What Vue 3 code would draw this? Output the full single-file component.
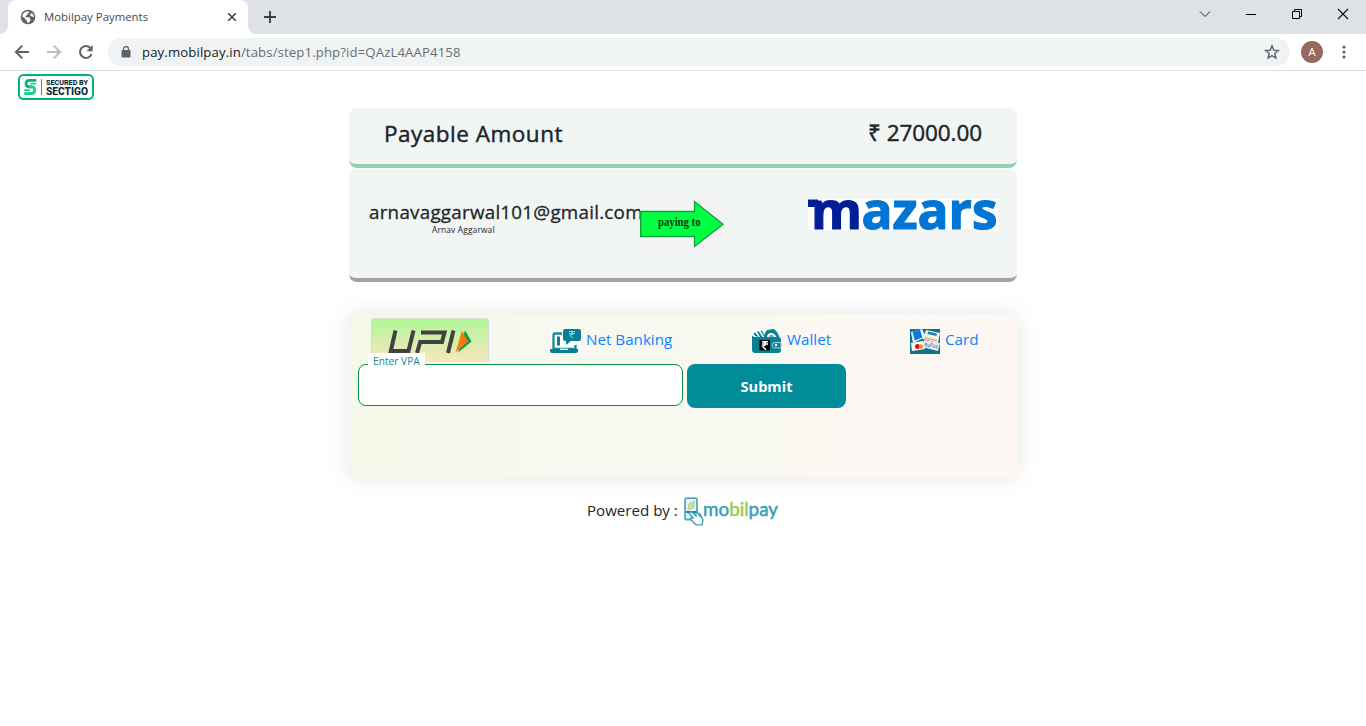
<script setup>
</script>

<template>
  <div class="window">
    <header class="tabstrip">
      <div class="tab">
        <svg class="globe" width="16" height="16" viewBox="0 0 16 16">
          <circle cx="8" cy="8" r="7.3" fill="#5f6368" />
          <path d="M7.500 2.300c2 .1 1.800 1 1.300 1.700-.5.700-1.300.5-1.500 1.200-.2.600-.2 1-.8 1.300-.6.300-1 .3-1 .9 0 .6.500.8 1.200.8h2c1 0 1.300.7 1.300 1.500 0 .8.6.9.6 1.600 0 .7-.9.900-1.200 1.400-.4.7-1.200 1.200-2.200 1-.5-.6.100-1.200-.3-1.900-.4-.7-1.300-.7-1.400-1.500-.1-.8-.8-1.300-1.600-1.900l-1.700-.9C2.400 4.700 4.700 2.500 7.500 2.300z" fill="#fff" />
          <path d="M11 4.300l2 .7c.7 1 1 2 .9 3-.9.300-1.300-.5-2.100-.7-.8-.2-1.500-.4-1.500-1.300 0-.8.500-1 .7-1.700z" fill="#fff" />
        </svg>
        <span class="tab-title">Mobilpay Payments</span>
        <svg class="tab-close" width="10" height="10" viewBox="0 0 10 10"><path d="M1.200 1.200l7.600 7.600M8.800 1.200L1.200 8.800" stroke="#3c4043" stroke-width="1.600" /></svg>
      </div>
      <svg class="plus" width="12" height="12" viewBox="0 0 12 12"><path d="M6 0v12M0 6h12" stroke="#3c4043" stroke-width="1.900" /></svg>
      <div class="controls">
        <svg width="12" height="12" viewBox="0 0 12 12"><path d="M1 3.500l5 5 5-5" fill="none" stroke="#222" /></svg>
        <svg width="12" height="12" viewBox="0 0 12 12"><path d="M1 6.500h10" stroke="#000" /></svg>
        <svg width="12" height="12" viewBox="0 0 12 12"><path d="M1.500 3.500h7v7h-7zM3.500 3.500v-2h7v7h-2" fill="none" stroke="#000" /></svg>
        <svg width="12" height="12" viewBox="0 0 12 12"><path d="M1 1l10 10M11 1L1 11" stroke="#111" stroke-width="1.100" /></svg>
      </div>
    </header>

    <div class="toolbar">
      <svg class="nav back" width="16" height="16" viewBox="0 0 16 16"><path d="M15 8H2.500M8.300 1.600L1.900 8l6.400 6.400" fill="none" stroke="#5f6368" stroke-width="2" /></svg>
      <svg class="nav" width="16" height="16" viewBox="0 0 16 16"><path d="M1 8h12.500M7.700 1.600L14.100 8l-6.400 6.400" fill="none" stroke="#bbbdc0" stroke-width="2" /></svg>
      <svg class="nav" width="16" height="16" viewBox="0 0 16 16"><path d="M13.600 10.200A6 6 0 1 1 12.500 4L13.600 5" fill="none" stroke="#5f6368" stroke-width="2" /><path d="M14.700 1v6.200H8.500z" fill="#5f6368" /></svg>
      <div class="omnibox">
        <svg class="lock" width="10" height="13" viewBox="0 0 10 13"><rect x="0.500" y="4" width="9" height="7.500" rx="1" fill="#5f6368" /><path d="M2.500 5V3a2.500 2.500 0 0 1 5 0V5" fill="none" stroke="#5f6368" stroke-width="1.300" /></svg>
        <span class="url"><b>pay.mobilpay.in</b>/tabs/step1.php?id=QAzL4AAP4158</span>
        <svg class="star" width="16" height="16" viewBox="0 0 16 16"><path d="M8 1.800l1.700 4.300 4.600.4-3.500 3 1.100 4.500L8 11.600 4.100 14l1.100-4.500-3.500-3 4.600-.4z" fill="none" stroke="#5f6368" stroke-width="1.400" /></svg>
      </div>
      <span class="avatar">A</span>
      <svg class="dots" width="4" height="14" viewBox="0 0 4 14"><g fill="#5f6368"><circle cx="2" cy="2" r="1.600" /><circle cx="2" cy="7" r="1.600" /><circle cx="2" cy="12" r="1.600" /></g></svg>
    </div>

    <main class="page">
      <svg class="seal" width="76" height="26" viewBox="0 0 76 26">
        <rect x="1" y="1" width="74" height="24" rx="4.500" fill="#fff" stroke="#00b67a" stroke-width="2" />
        <path d="M18.300 6.300H11.500Q8 6.300 8 9.600t3.500 3.300H14" fill="none" stroke="#00b67a" stroke-width="2.800" />
        <path d="M11.500 12.900h2.500q2.700 0 2.700 3.300t-3.200 3.300H6.300" fill="none" stroke="#19cf91" stroke-width="2.800" />
        <path d="M18.300 9.700h-6" stroke="#19cf91" stroke-width="1.500" />
        <path d="M6.300 16.200h5.500" stroke="#00b67a" stroke-width="1.500" />
        <path d="M23.500 5v16" stroke="#00b67a" />
        <text x="28" y="11" textLength="42" lengthAdjust="spacingAndGlyphs" class="seal-text" font-size="7.800">SECURED BY</text>
        <text x="28" y="20.800" textLength="42" lengthAdjust="spacingAndGlyphs" class="seal-text" font-size="11">SECTIGO</text>
      </svg>

      <div class="content">
        <section class="amount">
          <h1>Payable Amount</h1>
          <div class="total">₹ 27000.00</div>
        </section>

        <section class="parties">
          <div class="payer">
            <div class="email">arnavaggarwal101@gmail.com</div>
            <div class="name">Arnav Aggarwal</div>
          </div>
          <svg class="arrow" width="85" height="49" viewBox="0 0 85 49">
            <rect width="85" height="49" fill="#f5f4f4" />
            <path d="M.7 12.500H54.500V2.500L83 25.200 54.500 47.500V37.500H.7z" fill="#00ff40" stroke="#0b9e3c" stroke-width="1.300" />
            <text x="18" y="26.500" textLength="42.500" lengthAdjust="spacingAndGlyphs" class="arrow-text">paying to</text>
          </svg>
          <svg class="mazars" width="190" height="31" viewBox="0 0 190 31">
            <rect width="190" height="31" fill="#fff" />
            <text x="3" y="30" textLength="51" lengthAdjust="spacingAndGlyphs" fill="#001e96" stroke="#001e96">m</text>
            <path d="M0 .5h10v7.500H0z" fill="#001e96" />
            <text x="53.500" y="30" textLength="136" lengthAdjust="spacingAndGlyphs" fill="#0075d4" stroke="#0075d4">azars</text>
          </svg>
        </section>

        <section class="methods">
          <nav class="tabs">
            <a class="upi">
              <svg width="86" height="26" viewBox="0 0 86 26">
                <g fill="none" stroke="#414042" stroke-width="4">
                  <path d="M8.500 1.500L3.800 22H21.500L26.500 1.500" />
                  <path d="M30 24L33.200 13H55L57.500 3.500H34" />
                  <path d="M66.500 1.500L61 24" />
                </g>
                <path d="M78 1.500L84.500 12.500 71 23.500z" fill="#0a9b56" />
                <path d="M75 1.500L81 12.500 68.500 23.500z" fill="#ff7909" />
              </svg>
            </a>
            <a class="method">
              <svg width="31" height="25" viewBox="0 0 31 25">
                <rect width="31" height="25" fill="#fff" />
                <path d="M12 4.500H5q-1.500 0-1.500 1.500v14h22v-4" fill="none" stroke="#1b879b" stroke-width="2.300" />
                <path d="M7 7.500h3v9H7zM0 20h28v2q0 2-2 2H2q-2 0-2-2z" fill="#087f95" />
                <path d="M10 20.300h8" stroke="#fff" stroke-width="1.300" />
                <path d="M15 0h14q2 0 2 2v8q0 2-2 2h-8l-5 4v-4h-1q-2 0-2-2V2q0-2 2-2z" fill="#087f95" />
                <path d="M19 2.500h6M19 4.700h6M20.500 2.500q5 2.200-.5 4l3 3" fill="none" stroke="#b5dce2" />
              </svg>
              <span>Net Banking</span>
            </a>
            <a class="method wallet">
              <svg width="31" height="25" viewBox="0 0 31 25">
                <path d="M1 0h29v24H1z" fill="#fff" />
                <path d="M4 7L2.500 4.500 4 3.500l4 4.500zM9 8L6 2.500 7.500 2l4 6zM14 4l2-3 7-1 3 3 2.500 5h-3q-2-4-5.500-4t-4 4h-3z" fill="#087f95" />
                <path d="M10 1.500l4 6.500" stroke="#087f95" stroke-width="1.300" />
                <path d="M18 8q0-2.500 2.500-2.500T23 8z" fill="#6fb7c2" />
                <path d="M1 6.500l2 1.500h24q3 0 3 3v10q0 3-3 3H4q-3 0-3-3z" fill="#087f95" />
                <rect x="8.500" y="11" width="10.500" height="10.500" fill="#000" />
                <path d="M11 12.700h6M11 15h6M12 12.700q6 2.500-.5 4.500l3.500 3.500" fill="none" stroke="#fff" stroke-width="1.400" />
                <path d="M30 13.500h-6q-3 0-3 2.700t3 2.700h6z" fill="#087f95" stroke="#a7d7dc" />
                <circle cx="25" cy="16" r="1.300" fill="#fff" />
              </svg>
              <span>Wallet</span>
            </a>
            <a class="method">
              <svg width="30" height="25" viewBox="0 0 30 25">
                <rect width="30" height="25" fill="#0c748d" />
                <path d="M1 3l11-3 4 8-13 6z" fill="#eef7fb" />
                <path d="M2.500 2.800l7.500-2.300 2.300 8-7.500 3z" fill="#087bdc" />
                <path d="M16 1l14 3-2 10-15-4z" fill="#f1f3ee" />
                <path d="M18 2.500l9 2-.6 2.500-9-2z" fill="#217eaf" />
                <path d="M15 8l12 3-.4 1.500-12-3z" fill="#edac66" />
                <path d="M14 11l16 3-2 8-16-4z" fill="#e8eef8" />
                <text x="14" y="17.500" font-size="5.500" textLength="14" lengthAdjust="spacingAndGlyphs" transform="rotate(6 14 17)" fill="#263f8c" class="rupay">RuPay</text>
                <path d="M1 14l12-2 2 8-13 2z" fill="#fff" />
                <circle cx="7.500" cy="17.500" r="2.500" fill="#ed0019" />
                <circle cx="11" cy="17.500" r="2.300" fill="#ff9c0a" />
              </svg>
              <span>Card</span>
            </a>
          </nav>
          <form class="vpa" @submit.prevent>
            <label class="field">
              <span>Enter VPA</span>
              <input type="text" />
            </label>
            <button type="submit">Submit</button>
          </form>
        </section>

        <footer class="powered">
          <span>Powered by :</span>
          <svg width="95" height="30" viewBox="0 0 95 30">
            <rect x="1" y="1.200" width="12" height="21.500" rx="2" fill="#e5f4f8" stroke="#4aa6c2" stroke-width="1.700" />
            <path d="M5 6.500l5.500-2.500-1 7-5.500 1.500z" fill="#c8df9b" stroke="#a7ca6b" stroke-width=".7" />
            <path d="M2 15h11" stroke="#267f9e" stroke-width="2" />
            <path d="M5 16l4 5-2-.2q-2 1 1 3l4 4h6l1-5-4-6-3-2v4L7 14.500z" fill="#fff" stroke="#3999b8" stroke-width="1.300" />
            <path d="M14 16l2 4M16 16.500l2 4" stroke="#3999b8" />
            <text x="19" y="19.200" textLength="75" lengthAdjust="spacingAndGlyphs" font-size="18.500" class="brand" fill="#3b9dbb" stroke="#3b9dbb">mo<tspan fill="#9bc954" stroke="#9bc954">bil</tspan>pay</text>
          </svg>
        </footer>
      </div>
    </main>
  </div>
</template>

<style>
html, body { margin: 0; background: #fff; overflow: hidden; }
</style>

<style scoped>
* { box-sizing: border-box; }
.window { width: 1366px; height: 726px; overflow: hidden; background: #fff; color: #212529; font-family: "Open Sans", "Noto Sans", sans-serif; }
svg { display: block; flex: none; }
.tabstrip { height: 34px; background: #dee1e6; display: flex; align-items: center; padding-left: 8px; }
.tab { position: relative; width: 240px; height: 34px; background: #fff; border-radius: 8px 8px 0 0; display: flex; align-items: center; padding: 0 11px 0 12px; }
.tab::before, .tab::after { content: ""; position: absolute; bottom: 0; width: 8px; height: 8px; }
.tab::before { left: -8px; background: radial-gradient(circle at 0 0, transparent 7.500px, #fff 8px); }
.tab::after { right: -8px; background: radial-gradient(circle at 100% 0, transparent 7.500px, #fff 8px); }
.tab-title { margin: -2px 0 0 8px; font-size: 11.400px; color: #45494d; white-space: nowrap; }
.tab-close { margin-left: auto; }
.plus { margin-left: 16px; }
.controls { margin-left: auto; display: flex; gap: 34px; padding: 0 17px 6px 0; }
.toolbar { height: 37px; border-bottom: 1px solid #dcdddf; display: flex; align-items: center; padding: 0 20px 0 14px; }
.nav { margin-right: 16px; }
.omnibox { width: 1182px; height: 28px; margin-left: -2px; border-radius: 14px; background: #eff3f4; display: flex; align-items: center; padding: 0 10px 0 13px; }
.url { margin-left: 11px; font-size: 13.200px; letter-spacing: .11px; color: #6a6e72; white-space: nowrap; }
.url b { font-weight: 400; color: #202124; }
.star { margin-left: auto; }
.avatar { margin-left: 11px; width: 22px; height: 22px; border-radius: 50%; background: #966a5e; color: #fff; font: 11.500px/22px Roboto, sans-serif; text-align: center; }
.dots { margin-left: auto; }
.page { padding: 3px 0 0 18px; }
.seal { overflow: visible; }
.seal-text { font-family: Roboto, sans-serif; font-weight: 800; fill: #0b2a36; }
.content { width: 668px; margin: 8px 0 0 331px; }
.amount { height: 60px; border-radius: 8px; background: #f1f5f4; border-bottom: 4px solid #90d2ab; display: flex; justify-content: space-between; padding: 9px 35px 0; }
.amount h1, .total { margin: 0; font-size: 22.500px; font-weight: 400; -webkit-text-stroke: .45px #212529; line-height: 34px; white-space: nowrap; }
.amount h1 { letter-spacing: .5px; }
.total { line-height: 32px; letter-spacing: -.08px; }
.parties { margin-top: 1px; height: 113px; border-radius: 8px; background: #f1f5f4; border-bottom: 4px solid #a89fa9; display: flex; padding: 30px 19px 0 20px; }
.payer { width: 271px; white-space: nowrap; overflow: visible; }
.email { font-size: 18.800px; font-weight: 400; letter-spacing: .25px; -webkit-text-stroke: .3px #212529; line-height: 26px; }
.name { padding-left: 63px; font-size: 8.400px; letter-spacing: .15px; line-height: 10px; color: #212529; }
.arrow { position: relative; }
.arrow-text { font: 700 11.500px "Liberation Serif", serif; fill: #053d14; }
.mazars { margin-left: auto; overflow: visible; }
.mazars text { font-family: "Open Sans", sans-serif; font-size: 52px; font-weight: 700; stroke-width: 1.200px; }
.methods { margin-top: 32px; height: 163px; border-radius: 4px; background: linear-gradient(90deg, #f3f8e8, #f8f8f0 35%, #f9f8f0 62%, #fcf8f2 72%, #fef7f4); box-shadow: 0 0 24px rgba(0, 0, 0, .1); }
.tabs { display: grid; grid-template-columns: 179px 201px 159px 1fr; height: 50px; padding: 4px 0 0 22px; }
.upi { width: 118px; height: 44px; border: 1px solid #d5dfd9; border-bottom: 0; border-radius: 4px 4px 0 0; background: linear-gradient(#aff796, #fbe5bf); padding: 10px 0 0 15px; }
.method { display: flex; align-items: flex-start; padding-top: 11px; gap: 5px; color: #0a84ff; font-size: 15.200px; line-height: 20px; white-space: nowrap; }
.vpa { display: flex; padding-left: 9px; gap: 4px; }
.field { position: relative; }
.field span { position: absolute; left: 10px; top: -11px; height: 14px; padding: 0 5px; background: #fff; color: #148a89; font-size: 10.200px; line-height: 16px; white-space: nowrap; }
.field input { display: block; width: 325px; height: 42px; border: 1px solid #0b8c45; border-radius: 8px; background: #fff; outline: none; }
.vpa button { width: 159px; height: 44px; border: 0; border-radius: 8px; background: #008c99; color: #fff; font: 700 14.600px "Open Sans", sans-serif; }
.powered { margin-top: 20px; display: flex; padding-left: 238px; gap: 6px; font-size: 15.100px; line-height: 27px; }
.powered span { white-space: nowrap; }
.brand { font-family: Lato, sans-serif; font-weight: 400; stroke-width: .5px; }
</style>
